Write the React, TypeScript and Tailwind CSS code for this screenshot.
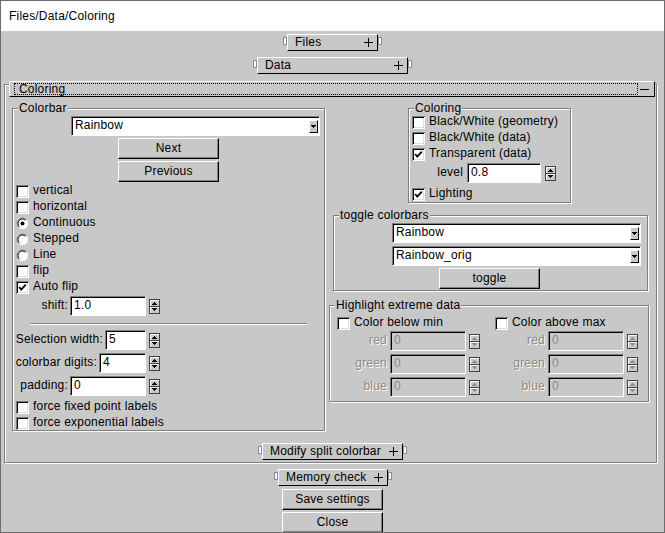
import React from "react";

const etched = "border border-[#7f7f7f] shadow-[inset_1px_1px_0_#fff,1px_1px_0_#fff]";
const raised = "border border-t-white border-l-white border-r-black border-b-black";
const sunken =
  "border border-t-[#7f7f7f] border-l-[#7f7f7f] border-r-white border-b-white shadow-[inset_1px_1px_0_#000]";

function Plus() {
  return (
    <svg width="9" height="9" viewBox="0 0 9 9" shapeRendering="crispEdges" className="shrink-0">
      <path d="M0 4h9v1H0zM4 0h1v9H4z" fill="#000" />
    </svg>
  );
}

function Minus() {
  return (
    <svg width="9" height="9" viewBox="0 0 9 9" shapeRendering="crispEdges" className="shrink-0">
      <path d="M0 4h9v1H0z" fill="#000" />
    </svg>
  );
}

function Nub() {
  return <div className="mt-[3px] w-[4px] h-[8px] shrink-0 bg-white border border-[#8a8a8a]" />;
}

function RolloutBar({ label, className, boxCls }: { label: string; className: string; boxCls: string }) {
  return (
    <div className={`flex items-start shrink-0 ${className}`}>
      <Nub />
      <div className={`h-[17px] flex items-center justify-between pl-[7px] pr-[4px] bg-[#c8c8c8] ${raised} ${boxCls}`}>
        <span className="leading-[15px] pb-[1px] whitespace-nowrap">{label}</span>
        <Plus />
      </div>
      <Nub />
    </div>
  );
}

function Button({ label, className }: { label: string; className: string }) {
  return (
    <div
      className={`h-[21px] w-[101px] shrink-0 flex items-center justify-center pb-[2px] bg-[#c8c8c8] ${raised} shadow-[inset_-1px_-1px_0_#7f7f7f] ${className}`}
    >
      {label}
    </div>
  );
}

function Check({ checked }: { checked?: boolean }) {
  return (
    <svg width="13" height="13" viewBox="0 0 13 13" className="shrink-0">
      <rect width="13" height="13" fill="#fff" />
      <path d="M0.5 12.5V0.5H12.5" fill="none" stroke="#7f7f7f" shapeRendering="crispEdges" />
      <path d="M1.5 11.5V1.5H11.5" fill="none" stroke="#000" shapeRendering="crispEdges" />
      <path d="M1.5 11.5H11.5V1.5" fill="none" stroke="#dcdcdc" shapeRendering="crispEdges" />
      {checked && <polyline points="3.2,6 5.3,8.6 9.8,3.6" fill="none" stroke="#000" strokeWidth="1.8" />}
    </svg>
  );
}

function Radio({ on }: { on?: boolean }) {
  return (
    <svg width="13" height="13" viewBox="0 0 13 13" className="shrink-0">
      <circle cx="6.5" cy="6.5" r="5.5" fill="#fff" />
      <path d="M2.6 10.4A5.5 5.5 0 0 1 10.4 2.6" fill="none" stroke="#7f7f7f" />
      <path d="M3.3 9.7A4.5 4.5 0 0 1 9.7 3.3" fill="none" stroke="#000" />
      {on && <circle cx="6.5" cy="6.5" r="2" fill="#000" />}
    </svg>
  );
}

function Spinner({ disabled }: { disabled?: boolean }) {
  const c = disabled ? "#8c8c8c" : "#000";
  return (
    <svg width="11" height="15" viewBox="0 0 11 15" shapeRendering="crispEdges" className="shrink-0">
      <rect width="11" height="15" fill="#c8c8c8" />
      <rect x="0.5" y="0.5" width="10" height="14" fill="none" stroke="#404040" />
      <path d="M1.5 6.5V1.5H9.5M1.5 13.5V8.5H9.5" fill="none" stroke="#fff" />
      <path d="M1 7.5H10" stroke="#404040" />
      <path d="M5 3h1v1H5zM4 4h3v1H4zM3 5h5v1H3z" fill={c} />
      <path d="M3 9h5v1H3zM4 10h3v1H4zM5 11h1v1H5z" fill={c} />
    </svg>
  );
}

function Field({ value, className, disabled }: { value: string; className: string; disabled?: boolean }) {
  return (
    <div
      className={`h-[20px] shrink-0 flex items-center pl-[3px] pb-[2px] ${sunken} ${
        disabled ? "bg-[#c8c8c8] text-[#8a8a8a]" : "bg-white"
      } ${className}`}
    >
      {value}
    </div>
  );
}

function Listbox({ value, className }: { value: string; className: string }) {
  return (
    <div className={`h-[20px] w-[249px] shrink-0 flex items-center justify-between bg-white pl-[3px] pr-[1px] ${sunken} ${className}`}>
      <span className="pb-[2px]">{value}</span>
      <div className={`w-[9px] h-[13px] flex items-center justify-center bg-[#c8c8c8] ${raised}`}>
        <svg width="5" height="3" viewBox="0 0 5 3" shapeRendering="crispEdges">
          <path d="M0 0h5v1H0zM1 1h3v1H1zM2 2h1v1H2z" fill="#000" />
        </svg>
      </div>
    </div>
  );
}

function CheckRow({ label, checked, className = "" }: { label: string; checked?: boolean; className?: string }) {
  return (
    <div className={`h-[16px] shrink-0 flex items-center ${className}`}>
      <Check checked={checked} />
      <span className="ml-[4px] pb-[2px] whitespace-nowrap">{label}</span>
    </div>
  );
}

function RadioRow({ label, on }: { label: string; on?: boolean }) {
  return (
    <div className="h-[16px] shrink-0 flex items-center pl-[3px]">
      <Radio on={on} />
      <span className="ml-[4px] pb-[2px]">{label}</span>
    </div>
  );
}

function SpinRow({
  label,
  value,
  labelCls,
  fieldCls,
  spinCls = "ml-[3px]",
  className = "",
  disabled,
}: {
  label: string;
  value: string;
  labelCls: string;
  fieldCls: string;
  spinCls?: string;
  className?: string;
  disabled?: boolean;
}) {
  return (
    <div className={`h-[20px] shrink-0 flex items-center ${className}`}>
      <span
        className={`shrink-0 text-right whitespace-nowrap pb-[2px] ${labelCls} ${
          disabled ? "text-[#8a8a8a] [text-shadow:1px_1px_0_#fff]" : ""
        }`}
      >
        {label}
      </span>
      <Field value={value} className={fieldCls} disabled={disabled} />
      <div className={`flex ${spinCls}`}>
        <Spinner disabled={disabled} />
      </div>
    </div>
  );
}

function Group({ title, className, children }: { title: string; className: string; children: React.ReactNode }) {
  return (
    <div className={`relative shrink-0 flex flex-col ${etched} ${className}`}>
      <span className="absolute left-[5px] -top-[8px] px-[1px] bg-[#c8c8c8] leading-[14px] whitespace-nowrap">{title}</span>
      {children}
    </div>
  );
}

function HighlightCol({ label }: { label: string }) {
  return (
    <div className="w-[158px] flex flex-col">
      <CheckRow label={label} className="mt-[9px] pl-[7px]" />
      <SpinRow label="red" value="0" labelCls="w-[57px]" fieldCls="ml-[3px] w-[76px]" disabled />
      <SpinRow label="green" value="0" labelCls="w-[57px]" fieldCls="ml-[3px] w-[76px]" className="mt-[3px]" disabled />
      <SpinRow label="blue" value="0" labelCls="w-[57px]" fieldCls="ml-[3px] w-[76px]" className="mt-[3px]" disabled />
    </div>
  );
}

export default function App() {
  return (
    <div className="w-[665px] h-[533px] bg-[#c8c8c8] border border-[#6e6e6e] flex flex-col overflow-hidden text-[12px] leading-[16px] tracking-[0.2px] text-black font-['Liberation_Sans',Arial,sans-serif]">
      <div className="h-[30px] shrink-0 bg-white flex items-center pl-[8px]">Files/Data/Coloring</div>

      <RolloutBar label="Files" className="ml-[282px] mt-[3px]" boxCls="w-[91px]" />
      <RolloutBar label="Data" className="ml-[252px] mt-[6px]" boxCls="w-[151px]" />

      {/* Coloring rollout */}
      <div className={`ml-[3px] mt-[10px] w-[653px] h-[379px] shrink-0 flex flex-col ${etched}`}>
        <div className={`ml-[4px] -mt-[4px] w-[646px] h-[16px] shrink-0 flex items-center bg-[#c8c8c8] ${raised}`}>
          <div className="ml-[4px] w-[624px] h-[12px] border border-dotted border-black flex items-center pl-[4px] leading-[10px]">
            Coloring
          </div>
          <div className="ml-[2px] flex">
            <Minus />
          </div>
        </div>

        <div className="flex items-start mt-[11px]">
          {/* left column */}
          <Group title="Colorbar" className="ml-[7px] w-[313px] h-[323px]">
            <Listbox value="Rainbow" className="ml-[58px] mt-[7px]" />
            <Button label="Next" className="ml-[105px] mt-[2px]" />
            <Button label="Previous" className="ml-[105px] mt-[2px]" />
            <div className="mt-[1px] flex flex-col">
              <CheckRow label="vertical" className="pl-[3px]" />
              <CheckRow label="horizontal" className="pl-[3px]" />
              <RadioRow label="Continuous" on />
              <RadioRow label="Stepped" />
              <RadioRow label="Line" />
              <CheckRow label="flip" className="pl-[3px]" />
              <CheckRow label="Auto flip" checked className="pl-[3px]" />
            </div>
            <SpinRow label="shift:" value="1.0" labelCls="w-[55px]" fieldCls="ml-[2px] w-[76px]" className="mt-[1px]" />
            <div className="ml-[17px] mt-[7px] w-[277px] h-[2px] border-t border-t-[#7f7f7f] border-b border-b-white" />
            <SpinRow label="Selection width:" value="5" labelCls="w-[90px]" fieldCls="ml-[2px] w-[41px]" className="mt-[5px]" />
            <SpinRow label="colorbar digits:" value="4" labelCls="w-[84px]" fieldCls="ml-[2px] w-[47px]" className="mt-[3px]" />
            <SpinRow label="padding:" value="0" labelCls="w-[55px]" fieldCls="ml-[2px] w-[76px]" className="mt-[3px]" />
            <CheckRow label="force fixed point labels" className="mt-[3px] pl-[3px]" />
            <CheckRow label="force exponential labels" className="pl-[3px]" />
          </Group>

          {/* right column */}
          <div className="ml-[4px] flex flex-col">
            <Group title="Coloring" className="ml-[79px] w-[163px] h-[95px]">
              <CheckRow label="Black/White (geometry)" className="mt-[5px] pl-[3px]" />
              <CheckRow label="Black/White (data)" className="pl-[3px]" />
              <CheckRow label="Transparent (data)" checked className="pl-[3px]" />
              <SpinRow label="level" value="0.8" labelCls="w-[54px]" fieldCls="ml-[4px] w-[74px]" spinCls="ml-[4px]" className="mt-[1px]" />
              <CheckRow label="Lighting" checked className="mt-[3px] pl-[3px]" />
            </Group>

            <Group title="toggle colorbars" className="ml-[4px] mt-[12px] w-[315px] h-[76px]">
              <Listbox value="Rainbow" className="ml-[58px] mt-[7px]" />
              <Listbox value="Rainbow_orig" className="ml-[58px] mt-[3px]" />
              <Button label="toggle" className="ml-[105px] mt-[2px]" />
            </Group>

            <Group title="Highlight extreme data" className="mt-[14px] w-[320px] h-[97px]">
              <div className="flex">
                <HighlightCol label="Color below min" />
                <HighlightCol label="Color above max" />
              </div>
            </Group>
          </div>
        </div>

        <RolloutBar label="Modify split colorbar" className="ml-[253px] mt-[12px]" boxCls="w-[141px]" />
      </div>

      <RolloutBar label="Memory check" className="ml-[273px] mt-[6px]" boxCls="w-[110px]" />
      <Button label="Save settings" className="ml-[281px] mt-[3px]" />
      <Button label="Close" className="ml-[281px] mt-[2px]" />
    </div>
  );
}
